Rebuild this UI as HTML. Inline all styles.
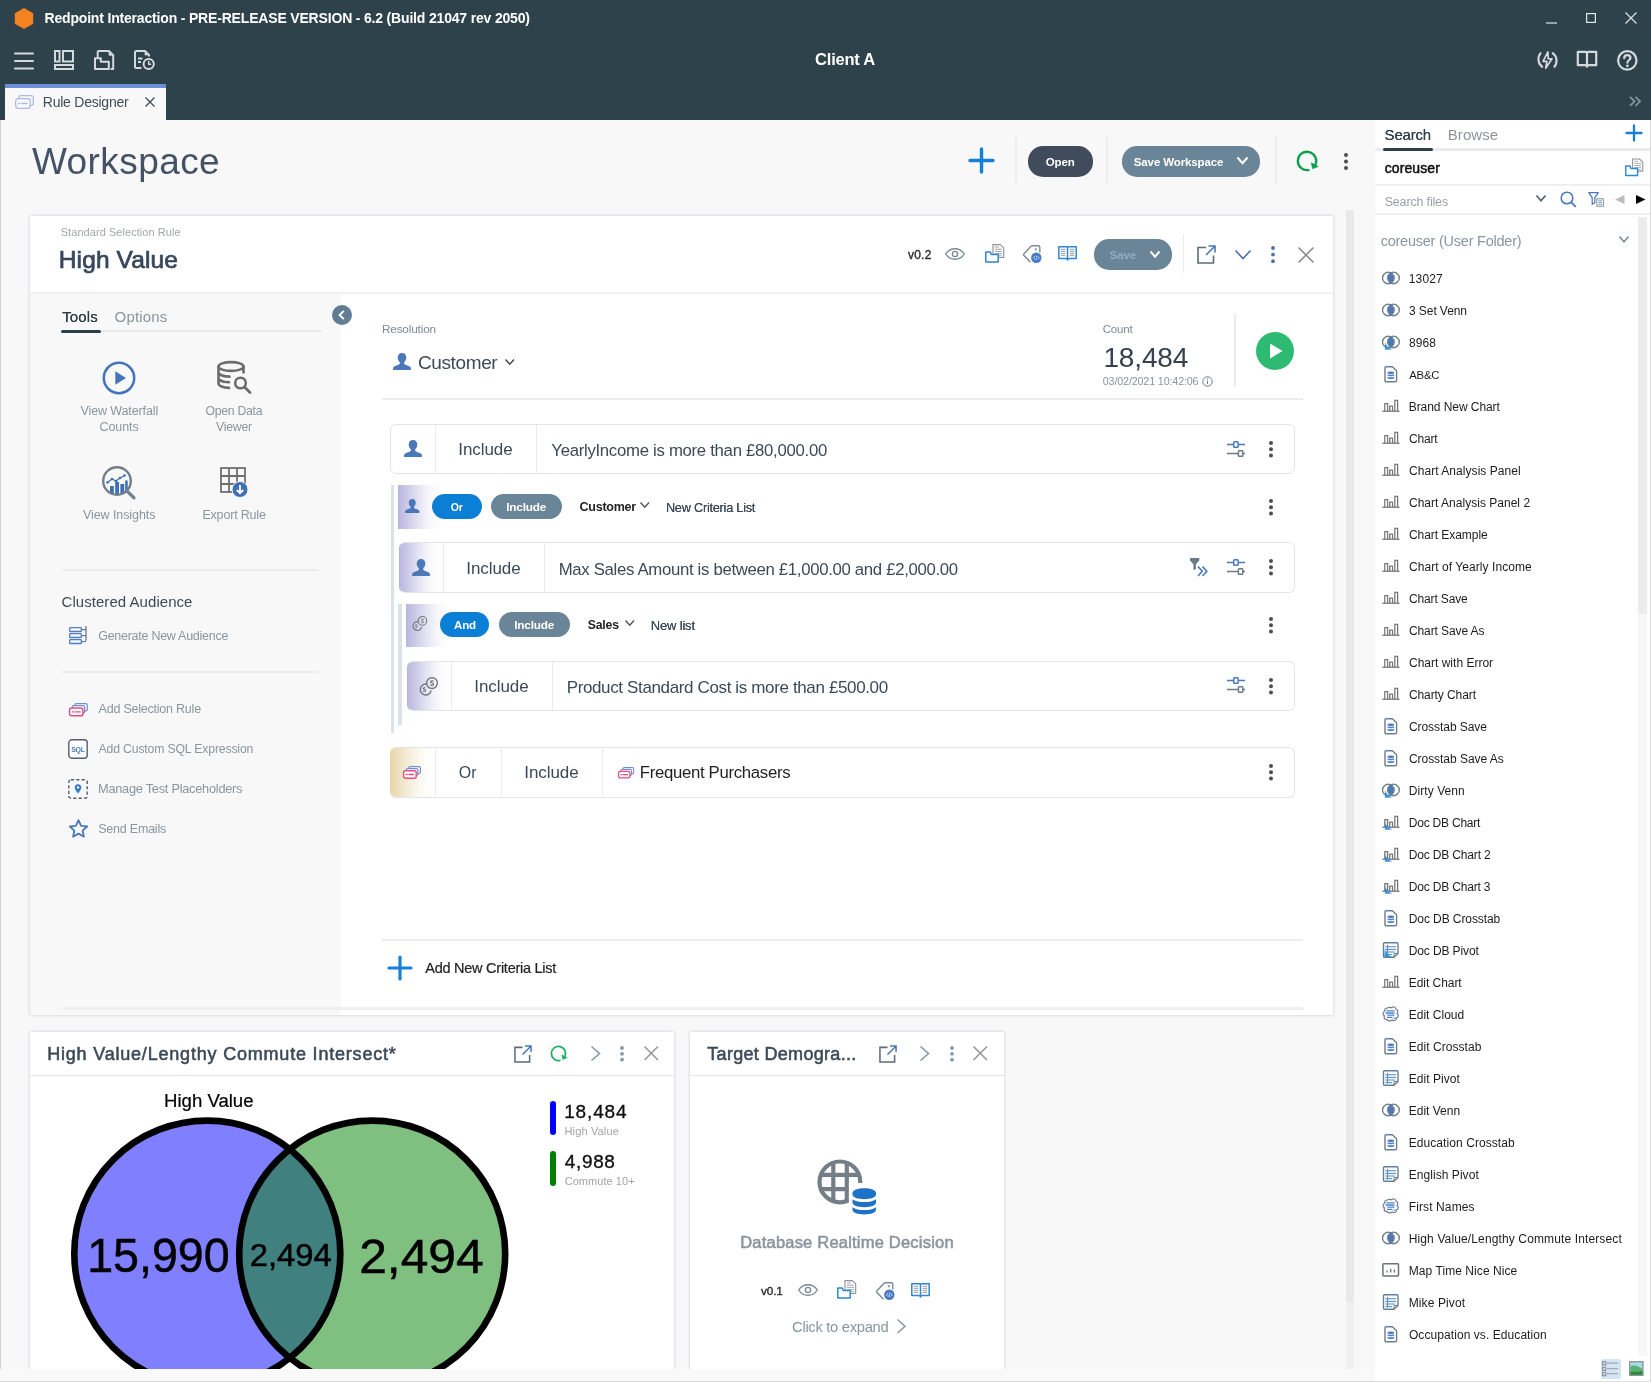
<!DOCTYPE html>
<html lang="en">
<head>
<meta charset="utf-8">
<title>Redpoint Interaction - Rule Designer</title>
<style>
*{box-sizing:border-box;margin:0;padding:0}
html,body{width:1651px;height:1382px;overflow:hidden;background:#f8f8f8}
body{filter:opacity(1);position:relative;font-family:"Liberation Sans",sans-serif;color:#3c4a57;font-size:13px;-webkit-font-smoothing:antialiased}
.abs{position:absolute}
.t,.inc,.crit,.lnk,.it{position:absolute;white-space:nowrap}
svg{position:absolute;overflow:visible}
#hdr{position:absolute;left:0;top:0;width:1651px;height:120px;background:#2e424b}
#tab{position:absolute;left:5px;top:84px;width:161px;height:36px;background:#f8f8f8;border-top:4px solid #6c8fd8}
.hd{font-weight:bold;color:#fff}
.card{position:absolute;background:#fff;box-shadow:0 0 3px rgba(60,70,110,.26)}
.pill{position:absolute;border-radius:15px;color:#fff;font-weight:bold;text-align:center;white-space:nowrap}
.vd{position:absolute;width:2px;background:#eeeeee}
.row{position:absolute;height:49px;border:1px solid #e3e5e7;border-radius:6px;background:#fff;overflow:hidden}
.row .dv{position:absolute;top:0;width:1px;height:49px;background:#e9ebec}
.row .grad{position:absolute;left:-1px;top:0;width:40px;height:49px}
.gp{background:linear-gradient(90deg,#b9b5de 0,#cfcce9 25%,#e6e5f3 50%,#f7f7fb 75%,#fff 100%)}
.row.hg{border-left-color:#b9b5de}
.row.ht{border-left-color:#e8d6a8}
.gt{background:linear-gradient(90deg,#e8d6a8 0,#efe3c4 25%,#f6efde 50%,#fcf9f2 75%,#fff 100%)}
.inc{position:absolute;font-size:17px;line-height:1;color:#3c4a57;white-space:nowrap}
.crit{position:absolute;font-size:17px;line-height:1;color:#3c4a57;white-space:nowrap}
.tool{position:absolute;font-size:13px;line-height:16px;color:#8a959e;text-align:center;width:120px}
.lnk{position:absolute;font-size:13px;line-height:1;color:#8a959e;white-space:nowrap}
.it{position:absolute;left:1409px;font-size:13px;line-height:1;color:#222;white-space:nowrap}
</style>
</head>
<body>
<div id="hdr"></div>
<svg style="left:14px;top:8px" width="20" height="21" viewBox="0 0 20 21" ><polygon points="10,0 19.2,5.2 19.2,15.8 10,21 0.8,15.8 0.8,5.2" fill="#f58220"/></svg>
<div class="t" style="left:44.48px;top:6.0px;font-size:14px;line-height:24px;color:#fff;font-weight:bold;letter-spacing:-0.177px;">Redpoint Interaction - PRE-RELEASE VERSION - 6.2 (Build 21047 rev 2050)</div>
<svg style="left:1546px;top:22px" width="11" height="2" viewBox="0 0 11 2" ><path d="M0 1H11" stroke="#dfe4e6" stroke-width="1.2"/></svg>
<svg style="left:1586px;top:13px" width="10" height="10" viewBox="0 0 10 10" ><rect x="0.6" y="0.6" width="8.8" height="8.8" fill="none" stroke="#dfe4e6" stroke-width="1.2"/></svg>
<svg style="left:1625px;top:12px" width="12" height="12" viewBox="0 0 12 12" ><path d="M0.5 0.5L11.5 11.5M11.5 0.5L0.5 11.5" stroke="#dfe4e6" stroke-width="1.2"/></svg>
<svg style="left:14px;top:51px" width="20" height="20" viewBox="0 0 20 20" ><g stroke="#d3d9dc" stroke-width="2" stroke-linecap="round"><path d="M1 2.5H19M1 10H19M1 17.5H19"/></g></svg>
<svg style="left:54px;top:50px" width="20" height="20" viewBox="0 0 20 20" ><g fill="none" stroke="#d3d9dc" stroke-width="2"><rect x="1" y="1" width="4.5" height="10.5"/><rect x="9" y="1" width="10" height="10.5"/><rect x="1" y="15" width="18" height="4"/></g></svg>
<svg style="left:94px;top:50px" width="20" height="20" viewBox="0 0 20 20" ><g fill="none" stroke="#d3d9dc" stroke-width="2" stroke-linejoin="round"><path d="M3.7 7.500V2A1 1 0 0 1 4.700 1H15L19.200 5.200V19H16.500"/><path d="M15 1V5.200H19.200Z" fill="#d3d9dc" stroke-width="0.8"/><path d="M1 8.300H6.800V11.800H14.800V19H1Z"/></g></svg>
<svg style="left:134px;top:50px" width="20" height="20" viewBox="0 0 20 20" ><g fill="none" stroke="#d3d9dc" stroke-width="2" stroke-linejoin="round"><path d="M7.500 18H2.500A1.500 1.500 0 0 1 1 16.500V2.500A1.500 1.500 0 0 1 2.500 1H11L15 5V6.500"/><path d="M11 1V5H15Z" fill="#d3d9dc" stroke-width="0.8"/><path d="M4 8.500H8.500M4 12H7" /><circle cx="14.700" cy="14" r="5.100"/><path d="M14.700 11V14.300H17.200" stroke-width="1.500"/></g></svg>
<div class="t" style="left:815.12px;top:47.0px;font-size:16.5px;line-height:24px;color:#fff;font-weight:bold;letter-spacing:-0.241px;">Client A</div>
<svg style="left:1537px;top:49.5px" width="21" height="20" viewBox="0 0 21 20" ><g fill="none" stroke="#d3d9dc" stroke-width="2.100" stroke-linecap="round" stroke-linejoin="round"><path d="M3.600 3.200A9.600 9.600 0 0 0 5.200 16.900"/><path d="M17.400 16.800A9.600 9.600 0 0 0 15.800 3.100"/><path d="M10.900 1.800L6 11.300H9.900L8.700 18.200L15 8.800H11.200Z" stroke-width="1.700"/></g></svg>
<svg style="left:1576px;top:50px" width="22" height="18" viewBox="0 0 22 18" ><g fill="none" stroke="#d3d9dc" stroke-width="2.200" stroke-linejoin="round"><path d="M1.800 1.800H9.400C10.400 1.800 11 2.300 11 3.200C11 2.300 11.600 1.800 12.600 1.800H20.200V15.200H12.800C11.800 15.200 11.300 15.700 11 16.600C10.700 15.700 10.200 15.200 9.200 15.200H1.800Z"/><path d="M11 3.200V16"/></g></svg>
<svg style="left:1617px;top:49.5px" width="21" height="21" viewBox="0 0 21 21" ><g fill="none" stroke="#d3d9dc" stroke-width="2.200"><circle cx="10.300" cy="10.400" r="9.200"/><path d="M7.200 8.200C7.200 6.200 8.600 5.200 10.300 5.200C12.100 5.200 13.500 6.300 13.500 7.900C13.500 9.900 10.400 10.200 10.400 12.700" stroke-linecap="round"/></g><circle cx="10.400" cy="15.800" r="1.400" fill="#d3d9dc"/></svg>
<svg style="left:1628.7px;top:95.5px" width="12" height="11" viewBox="0 0 12 11" ><path d="M1 0.800L5.500 5.300 1 9.800M6.500 0.800L11 5.300 6.500 9.800" fill="none" stroke="#8496a0" stroke-width="1.800"/></svg>
<div id="tab"></div>
<svg style="left:15px;top:95px" width="19" height="14" viewBox="0 0 19 14" ><g fill="none" stroke="#a9bbe8" stroke-width="1.3"><rect x="0.7" y="3.700" width="14.5" height="9.6" rx="2.5"/><path d="M3.8 3.700V2.800A2.100 2.100 0 0 1 5.900 0.700H16.200A2.100 2.100 0 0 1 18.300 2.800V8.200A2.100 2.100 0 0 1 16.200 10.300H15.200"/><path d="M3.600 8.500H5M7 8.500H12" stroke-linecap="round"/></g></svg>
<div class="t" style="left:42.83px;top:90.0px;font-size:14px;line-height:24px;color:#3f4d59;letter-spacing:-0.24px;">Rule Designer</div>
<svg style="left:145px;top:97px" width="10" height="10" viewBox="0 0 10 10" ><path d="M0.500 0.500L9.500 9.500M9.500 0.500L0.500 9.500" stroke="#3f4d59" stroke-width="1.3"/></svg>
<div class="abs" style="left:0;top:120px;width:1px;height:1262px;background:#cfcfcf"></div>
<div class="t" style="left:31.93px;top:149.5px;font-size:37px;line-height:24px;color:#435264;letter-spacing:0.422px;">Workspace</div>
<svg style="left:969px;top:148px" width="25" height="25" viewBox="0 0 25 25" ><path d="M12.500 1V24M1 12.500H24" stroke="#1680d8" stroke-width="3.400" stroke-linecap="round"/></svg>
<div class="vd" style="left:1015px;top:137px;height:46px"></div>
<div class="pill" style="left:1028px;top:146px;width:65px;height:30.500px;background:#404b5c"></div>
<div class="t" style="left:1045.74px;top:150.0px;font-size:11.5px;line-height:24px;color:#fff;font-weight:bold;letter-spacing:-0.083px;">Open</div>
<div class="vd" style="left:1106px;top:137px;height:46px"></div>
<div class="pill" style="left:1122px;top:146px;width:138px;height:30.500px;background:#6a8598"></div>
<div class="t" style="left:1133.81px;top:150.0px;font-size:11.5px;line-height:24px;color:#fff;font-weight:bold;letter-spacing:-0.12px;">Save Workspace</div>
<svg style="left:1237px;top:157px" width="11" height="7" viewBox="0 0 11 7" ><path d="M0.500 0.500L5.5 6.2L10.5 0.500" fill="none" stroke="#fff" stroke-width="2"/></svg>
<div class="vd" style="left:1275px;top:137px;height:46px"></div>
<svg style="left:1296px;top:150px" width="22" height="22" viewBox="0 0 22 22" ><path d="M12.600 20.060A9.200 9.200 0 1 1 19.340 14.890" fill="none" stroke="#0aa04c" stroke-width="2.300" stroke-linecap="round"/><path d="M15.200 12.700L22.200 16.500 16.600 18.800Z" fill="#0aa04c" stroke="#0aa04c" stroke-width="0.600" stroke-linejoin="round"/></svg>
<svg style="left:1343.6px;top:152.6px" width="4" height="18" viewBox="0 0 4 18" ><g fill="#4d4d4d"><circle cx="2" cy="2" r="2"/><circle cx="2" cy="8.5" r="2"/><circle cx="2" cy="15.0" r="2"/></g></svg>
<div class="abs" style="left:1346px;top:210px;width:8px;height:1160px;background:#f0f0f0"></div>
<div class="abs" style="left:1346px;top:210px;width:8px;height:1092px;background:#e9e9e9"></div>
<div class="card" style="left:30px;top:216px;width:1303px;height:799px"></div>
<div class="abs" style="left:30px;top:292px;width:1303px;height:2px;background:#f1f1f1"></div>
<div class="abs" style="left:30px;top:294px;width:311px;height:721px;background:#f8f8f8"></div>
<div class="t" style="left:60.7px;top:220.0px;font-size:11px;line-height:24px;color:#a2a6aa;letter-spacing:0.06px;">Standard Selection Rule</div>
<div class="t" style="left:58.8px;top:247.5px;font-size:24.5px;line-height:24px;color:#37465a;letter-spacing:0.111px;-webkit-text-stroke:0.7px currentColor;">High Value</div>
<div class="t" style="left:908.0px;top:243.0px;font-size:12px;line-height:24px;color:#2b2b2b;letter-spacing:0.225px;-webkit-text-stroke:0.35px currentColor;">v0.2</div>
<svg style="left:945px;top:248px" width="20" height="12" viewBox="0 0 20 12" ><g fill="none" stroke="#7b8a93" stroke-width="1.4"><path d="M0.700 6C3 2.300 6.300 0.700 10 0.700C13.700 0.700 17 2.300 19.300 6C17 9.700 13.700 11.300 10 11.300C6.300 11.300 3 9.700 0.700 6Z"/><circle cx="10" cy="6" r="2.600"/></g></svg>
<svg style="left:984.5px;top:244.3px" width="20" height="19" viewBox="0 0 20 19" ><g fill="#fff" stroke="#8b8f94" stroke-width="1.1" stroke-linejoin="round"><path d="M8 13.500V0.600H15.300L18.700 3.800V13.500Z"/></g><g stroke="#9a9ea3" stroke-width="0.9"><path d="M9.800 3H14M9.800 5.200H17M9.800 7.400H17M9.800 9.600H17M13.500 11.800H17"/></g><path d="M0.800 18V8H5.300L6.300 10.600H13.200V18Z" fill="#fff" stroke="#2f86d6" stroke-width="1.5" stroke-linejoin="round"/></svg>
<svg style="left:1022.5px;top:245.2px" width="19" height="18" viewBox="0 0 19 18" ><g fill="none" stroke="#7b8a93" stroke-width="1.4" stroke-linejoin="round" stroke-linecap="round"><path d="M7 16.800L1 10.600C0.500 10 0.500 9.300 1 8.800L8 1.300C8.400 0.900 8.900 0.700 9.400 0.700H15.300C16.200 0.700 16.800 1.300 16.800 2.200V7"/></g><circle cx="12.800" cy="4.300" r="1.100" fill="#7b8a93"/><circle cx="13.300" cy="12.800" r="5.200" fill="#4a78c4"/><path d="M12 11L10.300 12.800 12 14.600M14.600 11L16.300 12.800 14.600 14.600M13.800 10.600L12.800 15" fill="none" stroke="#cfe0f7" stroke-width="0.8"/></svg>
<svg style="left:1058px;top:246.3px" width="19" height="15" viewBox="0 0 19 15" ><g fill="#fff" stroke="#2f86d6" stroke-width="1.5" stroke-linejoin="round"><path d="M0.800 0.800H8.300C9 0.800 9.500 1.200 9.500 1.800C9.500 1.200 10 0.800 10.700 0.800H18.200V12.600H11C10.200 12.600 9.800 13 9.500 13.900C9.200 13 8.800 12.600 8 12.600H0.800Z"/><path d="M9.500 1.800V13.500"/></g><g stroke="#8b8f94" stroke-width="0.9"><path d="M2.800 3.300H7.300M2.800 5.300H7.300M2.800 7.300H7.300M2.800 9.300H7.300M11.700 3.300H16.200M11.700 5.300H16.200M11.700 7.300H16.200M11.700 9.300H16.200"/></g></svg>
<div class="pill" style="left:1094px;top:239px;width:78px;height:30.500px;background:#6a8598"></div>
<div class="t" style="left:1109.81px;top:243.0px;font-size:11.5px;line-height:24px;color:#93abbd;font-weight:bold;letter-spacing:-0.129px;">Save</div>
<svg style="left:1150px;top:251px" width="10" height="6" viewBox="0 0 10 6" ><path d="M0.500 0.500L5.0 5.7L9.5 0.500" fill="none" stroke="#fff" stroke-width="2"/></svg>
<div class="abs" style="left:1183px;top:234px;width:1px;height:39px;background:#ececec"></div>
<svg style="left:1197px;top:244.5px" width="19" height="19" viewBox="0 0 19 19" ><path d="M9 2.500H1V18H16.500V10.500" fill="none" stroke="#5f6b75" stroke-width="1.600"/><path d="M9 10L17.500 1.500M11.500 1H18V7.500" fill="none" stroke="#4a78b8" stroke-width="1.600"/></svg>
<svg style="left:1235px;top:250px" width="16" height="9" viewBox="0 0 16 9" ><path d="M0.500 0.500L8.0 8.5L15.5 0.500" fill="none" stroke="#4a6fa8" stroke-width="1.6"/></svg>
<svg style="left:1271px;top:246px" width="4" height="18" viewBox="0 0 4 18" ><g fill="#4a6fa8"><circle cx="2" cy="2" r="1.9"/><circle cx="2" cy="8.6" r="1.9"/><circle cx="2" cy="15.2" r="1.9"/></g></svg>
<svg style="left:1297.5px;top:246.5px" width="16" height="16" viewBox="0 0 16 16" ><path d="M0.500 0.500L15.5 15.5M15.5 0.500L0.500 15.5" stroke="#8a8a8a" stroke-width="1.6" fill="none"/></svg>
<div class="t" style="left:62.31px;top:304.5px;font-size:15px;line-height:24px;color:#2e3f4c;letter-spacing:0.078px;text-shadow:0 0 0.4px #2e3f4c;">Tools</div>
<div class="t" style="left:114.59px;top:304.5px;font-size:15px;line-height:24px;color:#8a959e;letter-spacing:0.167px;">Options</div>
<div class="abs" style="left:62px;top:330px;width:260px;height:2px;background:#ebebeb"></div>
<div class="abs" style="left:60.5px;top:330px;width:40px;height:3px;border-radius:2px;background:#2e3f4c"></div>
<svg style="left:332px;top:305px" width="20" height="20" viewBox="0 0 20 20" ><circle cx="10" cy="10" r="10" fill="#607d94"/><path d="M11.800 5.800L7.600 10 11.800 14.200" fill="none" stroke="#fff" stroke-width="1.900"/></svg>
<svg style="left:102px;top:361px" width="34" height="34" viewBox="0 0 34 34" ><circle cx="17" cy="17" r="15.200" fill="none" stroke="#4474ba" stroke-width="2.500"/><path d="M13.300 10.200V23.800L24 17Z" fill="#4474ba"/></svg>
<div class="t" style="left:80.5px;top:399.0px;font-size:12.5px;line-height:24px;color:#8a959e;letter-spacing:-0.111px;">View Waterfall</div>
<div class="t" style="left:99.62px;top:415.0px;font-size:12.5px;line-height:24px;color:#8a959e;letter-spacing:-0.113px;">Counts</div>
<svg style="left:217px;top:361px" width="36" height="34" viewBox="0 0 36 34" ><g fill="none" stroke="#6c6c6c" stroke-width="2.600" stroke-linecap="round"><ellipse cx="14" cy="5.500" rx="12.500" ry="4.400"/><path d="M1.500 5.500V22.500C1.500 24.800 6 26.700 12 26.900M1.500 11.200C1.500 13.500 6 15.300 12.500 15.600M1.500 16.900C1.500 19.200 6 21 12 21.300M26.500 5.500V11.500"/><circle cx="23.500" cy="22" r="5.300"/><path d="M27.500 26L33 31.500" stroke-width="2.800"/></g></svg>
<div class="t" style="left:205.41px;top:399.0px;font-size:12.25px;line-height:24px;color:#8a959e;letter-spacing:-0.273px;">Open Data</div>
<div class="t" style="left:216.0px;top:415.0px;font-size:12.25px;line-height:24px;color:#8a959e;letter-spacing:-0.212px;">Viewer</div>
<svg style="left:101px;top:465px" width="36" height="36" viewBox="0 0 36 36" ><g fill="#3f6fb5"><rect x="9" y="21" width="3.800" height="8"/><rect x="14.200" y="17" width="3.800" height="12.500"/><rect x="19.400" y="19" width="3.800" height="10"/><rect x="24.200" y="15.500" width="2.500" height="11"/></g><path d="M6.500 17.500L11 14L15 16L19 13L23.500 10.500" fill="none" stroke="#3f6fb5" stroke-width="1.300"/><g fill="#3f6fb5"><circle cx="6.500" cy="17.500" r="1.300"/><circle cx="11" cy="14" r="1.300"/><circle cx="15" cy="16" r="1.300"/><circle cx="19" cy="13" r="1.300"/><circle cx="23.500" cy="10.500" r="1.300"/></g><circle cx="16" cy="16" r="13.800" fill="none" stroke="#707e89" stroke-width="2.400"/><path d="M26 26L33 32.800" stroke="#707e89" stroke-width="3.200" stroke-linecap="round"/></svg>
<div class="t" style="left:83.0px;top:503.0px;font-size:12.5px;line-height:24px;color:#8a959e;letter-spacing:-0.083px;">View Insights</div>
<svg style="left:220px;top:467px" width="30" height="32" viewBox="0 0 30 32" ><g fill="none" stroke="#6f6f6f" stroke-width="1.800"><rect x="1" y="1" width="24" height="24"/><path d="M9 1V25M17 1V25M1 9H25M1 17H25"/></g><circle cx="20" cy="22.500" r="8" fill="#3f6fb5" stroke="#f8f8f8" stroke-width="1"/><path d="M20 18V26M16.800 23L20 26.300 23.200 23" fill="none" stroke="#fff" stroke-width="1.800"/></svg>
<div class="t" style="left:202.4px;top:503.0px;font-size:12.5px;line-height:24px;color:#8a959e;letter-spacing:-0.181px;">Export Rule</div>
<div class="abs" style="left:62px;top:569px;width:256px;height:2px;background:#ececec"></div>
<div class="t" style="left:61.55px;top:589.5px;font-size:15px;line-height:24px;color:#3c4a57;letter-spacing:0.048px;">Clustered Audience</div>
<svg style="left:69px;top:626px" width="20" height="19" viewBox="0 0 20 19" ><g fill="none" stroke="#4f7fc6" stroke-width="1.300"><rect x="0.700" y="1.700" width="11.600" height="3.800" rx="0.600"/><rect x="0.700" y="7.700" width="11.600" height="3.800" rx="0.600"/><rect x="0.700" y="13.700" width="11.600" height="3.800" rx="0.600"/><path d="M12.300 3.600H17M12.300 9.600H17M12.300 15.600H15.500A1.500 1.500 0 0 0 17 14.100V0" stroke="#6c7a86"/></g></svg>
<div class="lnk" style="left:98.22px;top:624.0px;font-size:12.5px;line-height:24px;color:#8a959e;letter-spacing:-0.269px;">Generate New Audience</div>
<div class="abs" style="left:62px;top:671px;width:256px;height:2px;background:#ececec"></div>
<svg style="left:68.8px;top:703px" width="20" height="14" viewBox="0 0 20 14" ><g transform="scale(1.05)" fill="#fff" stroke-width="1.200" stroke-linejoin="round"><rect x="5.600" y="0.600" width="11.800" height="7" rx="1.500" stroke="#6f8fcf"/><rect x="3.100" y="2.600" width="11.800" height="7" rx="1.500" stroke="#6f8fcf"/><rect x="0.600" y="4.800" width="12.600" height="7.400" rx="1.800" stroke="#ea4c7d" stroke-width="1.400"/><path d="M3.200 8.500H4.200M6 8.500H10.600" stroke="#ea4c7d" stroke-width="1.300" stroke-linecap="round"/></g></svg>
<div class="lnk" style="left:98.6px;top:697.0px;font-size:12.5px;line-height:24px;color:#8a959e;letter-spacing:-0.224px;">Add Selection Rule</div>
<svg style="left:67.5px;top:739px" width="21" height="20" viewBox="0 0 21 20" ><rect x="0.800" y="0.800" width="18.400" height="18.400" rx="3" fill="#fff" stroke="#555f69" stroke-width="1.400"/><text x="10" y="12.800" font-family="Liberation Sans, sans-serif" font-size="7" font-weight="bold" fill="#4a78b8" text-anchor="middle" letter-spacing="-0.3">SQL</text></svg>
<div class="lnk" style="left:98.6px;top:737.0px;font-size:12.25px;line-height:24px;color:#8a959e;letter-spacing:-0.172px;">Add Custom SQL Expression</div>
<svg style="left:67.5px;top:779px" width="21" height="20" viewBox="0 0 21 20" ><rect x="0.800" y="0.800" width="18.400" height="18.400" rx="2" fill="none" stroke="#555f69" stroke-width="1.400" stroke-dasharray="3.200 2.200"/><path d="M10 5.200C8 5.200 6.700 6.600 6.700 8.400C6.700 10.500 10 14.400 10 14.400C10 14.400 13.300 10.500 13.300 8.400C13.300 6.600 12 5.200 10 5.200Z" fill="#2f78c8"/><circle cx="10" cy="8.400" r="1.200" fill="#fff"/></svg>
<div class="lnk" style="left:98.0px;top:776.5px;font-size:12.75px;line-height:24px;color:#8a959e;letter-spacing:-0.242px;">Manage Test Placeholders</div>
<svg style="left:68.5px;top:819px" width="20" height="19" viewBox="0 0 20 19" ><path d="M9.500 1.200L12.100 6.800L18.200 7.500L13.600 11.600L14.900 17.700L9.500 14.600L4.100 17.700L5.400 11.600L0.800 7.500L6.900 6.800Z" fill="none" stroke="#4a78b8" stroke-width="1.800" stroke-linejoin="round"/></svg>
<div class="lnk" style="left:98.26px;top:817.0px;font-size:12.5px;line-height:24px;color:#8a959e;letter-spacing:-0.219px;">Send Emails</div>
<div class="t" style="left:381.94px;top:316.5px;font-size:11.75px;line-height:24px;color:#7b8a93;letter-spacing:-0.153px;">Resolution</div>
<svg style="left:393.4px;top:353.3px" width="18" height="17" viewBox="0 0 18 17" ><path d="M9 0C11.600 0 13.300 2 13.300 4.600C13.300 6.600 12.400 8.300 11.200 9.200V10.300C11.200 11 11.700 11.400 12.500 11.700L15.800 12.900C17.200 13.400 18 14.400 18 15.800V16.200C18 16.700 17.700 17 17.200 17H0.800C0.300 17 0 16.700 0 16.200V15.800C0 14.400 0.800 13.400 2.200 12.900L5.500 11.700C6.300 11.400 6.800 11 6.800 10.300V9.200C5.600 8.300 4.700 6.600 4.700 4.600C4.700 2 6.400 0 9 0Z" fill="#4a78b8"/></svg>
<div class="t" style="left:417.94px;top:350.5px;font-size:19.0px;line-height:24px;color:#3c4a57;letter-spacing:-0.375px;">Customer</div>
<svg style="left:505px;top:358.5px" width="10" height="6" viewBox="0 0 10 6" ><path d="M0.500 0.500L4.75 5.2L9.0 0.500" fill="none" stroke="#3c4a57" stroke-width="1.5"/></svg>
<div class="t" style="left:1102.66px;top:317.0px;font-size:11.5px;line-height:24px;color:#7b8a93;letter-spacing:-0.141px;">Count</div>
<div class="t" style="left:1103.42px;top:345.5px;font-size:28px;line-height:24px;color:#37424e;letter-spacing:-0.15px;">18,484</div>
<div class="t" style="left:1102.78px;top:369.0px;font-size:10.75px;line-height:24px;color:#8a959e;letter-spacing:-0.156px;">03/02/2021 10:42:06</div>
<svg style="left:1202px;top:376px" width="11" height="11" viewBox="0 0 11 11" ><circle cx="5.500" cy="5.500" r="4.700" fill="none" stroke="#6b7780" stroke-width="1"/><path d="M5.500 4.800V8" stroke="#6b7780" stroke-width="1.100"/><circle cx="5.500" cy="3.200" r="0.700" fill="#6b7780"/></svg>
<div class="abs" style="left:1234px;top:314px;width:1.500px;height:72px;background:#ebebeb"></div>
<svg style="left:1255.5px;top:331.5px" width="38" height="38" viewBox="0 0 38 38" ><circle cx="19" cy="19" r="19" fill="#2dbb73"/><path d="M14 11.500V26.500L26.500 19Z" fill="#fff"/></svg>
<div class="abs" style="left:382px;top:397.500px;width:921px;height:2px;background:#eeeeee"></div>
<div class="row" style="left:390px;top:424px;width:905px;height:50px"><div class="dv" style="left:44px;height:50px"></div><div class="dv" style="left:145px;height:50px"></div></div>
<svg style="left:403.7px;top:440.3px" width="18" height="17" viewBox="0 0 18 17" ><path d="M9 0C11.600 0 13.300 2 13.300 4.600C13.300 6.600 12.400 8.300 11.200 9.200V10.300C11.200 11 11.700 11.400 12.500 11.700L15.800 12.900C17.200 13.400 18 14.400 18 15.800V16.200C18 16.700 17.700 17 17.200 17H0.800C0.300 17 0 16.700 0 16.200V15.800C0 14.400 0.800 13.400 2.200 12.900L5.500 11.700C6.300 11.400 6.800 11 6.800 10.300V9.200C5.600 8.300 4.700 6.600 4.700 4.600C4.700 2 6.400 0 9 0Z" fill="#4a78b8"/></svg>
<div class="inc" style="left:458.36px;top:437.5px;font-size:17px;line-height:24px;color:#3c4a57;letter-spacing:-0.094px;">Include</div>
<div class="crit" style="left:551.31px;top:438.5px;font-size:16.75px;line-height:24px;color:#3c4a57;letter-spacing:-0.293px;">YearlyIncome is more than £80,000.00</div>
<svg style="left:1227px;top:440.6px" width="19" height="17" viewBox="0 0 19 17" ><path d="M0 3.500H6.500M11.500 3.500H18" stroke="#4a78b8" stroke-width="1.400"/><rect x="6.700" y="0.700" width="4.400" height="5.600" rx="0.800" fill="none" stroke="#4a78b8" stroke-width="1.500"/><path d="M0 12.500H11.200M16 12.500H18" stroke="#6c7a86" stroke-width="1.400"/><rect x="11.400" y="9.700" width="4.400" height="5.600" rx="0.800" fill="none" stroke="#6c7a86" stroke-width="1.500"/></svg><svg style="left:1268.8px;top:440.70000000000005px" width="4" height="18" viewBox="0 0 4 18" ><g fill="#4d4d4d"><circle cx="2" cy="2" r="2"/><circle cx="2" cy="8.2" r="2"/><circle cx="2" cy="14.4" r="2"/></g></svg>
<div class="abs" style="left:390.500px;top:484.500px;width:3.500px;height:248px;background:#dbe3ea"></div>
<div class="abs gp" style="left:398px;top:484.500px;width:42px;height:44px"></div>
<svg style="left:404.9px;top:498.8px" width="14.5" height="14" viewBox="0 0 18 17" preserveAspectRatio="none"><path d="M9 0C11.600 0 13.300 2 13.300 4.600C13.300 6.600 12.400 8.300 11.200 9.200V10.300C11.200 11 11.700 11.400 12.500 11.700L15.800 12.900C17.200 13.400 18 14.400 18 15.800V16.200C18 16.700 17.700 17 17.200 17H0.800C0.300 17 0 16.700 0 16.200V15.800C0 14.400 0.800 13.400 2.200 12.900L5.500 11.700C6.300 11.400 6.800 11 6.800 10.300V9.200C5.600 8.300 4.700 6.600 4.700 4.600C4.700 2 6.400 0 9 0Z" fill="#4a78b8"/></svg>
<div class="pill" style="left:432px;top:494px;width:49.500px;height:24.500px;background:#0a7fd5"></div>
<div class="t" style="left:450.82px;top:495.0px;font-size:10.5px;line-height:24px;color:#fff;font-weight:bold;letter-spacing:-0.25px;">Or</div>
<div class="pill" style="left:491px;top:494px;width:70.500px;height:24.500px;background:#6a8598"></div>
<div class="t" style="left:506.25px;top:494.5px;font-size:11.75px;line-height:24px;color:#fff;font-weight:bold;letter-spacing:-0.177px;">Include</div>
<div class="t" style="left:579.62px;top:495.0px;font-size:12.5px;line-height:24px;color:#222;letter-spacing:-0.268px;font-weight:bold;">Customer</div>
<svg style="left:640px;top:502px" width="10" height="6" viewBox="0 0 10 6" ><path d="M0.500 0.500L4.75 5.2L9.0 0.500" fill="none" stroke="#555" stroke-width="1.4"/></svg>
<div class="t" style="left:665.9px;top:495.5px;font-size:12.75px;line-height:24px;color:#3c4a57;letter-spacing:-0.25px;text-shadow:0 0 0.3px #3c4a57;">New Criteria List</div>
<svg style="left:1268.8px;top:498.5px" width="4" height="18" viewBox="0 0 4 18" ><g fill="#4d4d4d"><circle cx="2" cy="2" r="2"/><circle cx="2" cy="8.2" r="2"/><circle cx="2" cy="14.4" r="2"/></g></svg>
<div class="row hg" style="left:398.5px;top:542px;width:896.5px;height:51px"><div class="grad gp" style="height:51px"></div><div class="dv" style="left:43.5px;height:51px"></div><div class="dv" style="left:144.5px;height:51px"></div></div>
<svg style="left:411.7px;top:558.8px" width="18" height="17" viewBox="0 0 18 17" ><path d="M9 0C11.600 0 13.300 2 13.300 4.600C13.300 6.600 12.400 8.300 11.200 9.200V10.300C11.200 11 11.700 11.400 12.500 11.700L15.800 12.900C17.200 13.400 18 14.400 18 15.800V16.200C18 16.700 17.700 17 17.200 17H0.800C0.300 17 0 16.700 0 16.200V15.800C0 14.400 0.800 13.400 2.200 12.900L5.500 11.700C6.300 11.400 6.800 11 6.800 10.300V9.200C5.600 8.300 4.700 6.600 4.700 4.600C4.700 2 6.400 0 9 0Z" fill="#4a78b8"/></svg>
<div class="inc" style="left:466.36px;top:556.5px;font-size:17px;line-height:24px;color:#3c4a57;letter-spacing:-0.094px;">Include</div>
<div class="crit" style="left:558.71px;top:557.5px;font-size:16.75px;line-height:24px;color:#3c4a57;letter-spacing:-0.318px;">Max Sales Amount is between £1,000.00 and £2,000.00</div>
<svg style="left:1189.7px;top:558.1px" width="19" height="19" viewBox="0 0 19 19" ><path d="M0 0.600C0 0.200 0.200 0 0.600 0H8.700C9.100 0 9.300 0.200 9.300 0.600V2.500L5.900 6.300V11.200L3.400 12V6.300L0 2.500Z" fill="#6c7a86"/><path d="M8 8.600L12.300 13.300 8 18M12.500 8.600L16.800 13.300 12.500 18" fill="none" stroke="#4a78b8" stroke-width="1.600"/></svg><svg style="left:1227px;top:559.0px" width="19" height="17" viewBox="0 0 19 17" ><path d="M0 3.500H6.500M11.500 3.500H18" stroke="#4a78b8" stroke-width="1.400"/><rect x="6.700" y="0.700" width="4.400" height="5.600" rx="0.800" fill="none" stroke="#4a78b8" stroke-width="1.500"/><path d="M0 12.500H11.200M16 12.500H18" stroke="#6c7a86" stroke-width="1.400"/><rect x="11.400" y="9.700" width="4.400" height="5.600" rx="0.800" fill="none" stroke="#6c7a86" stroke-width="1.500"/></svg><svg style="left:1268.8px;top:559.1px" width="4" height="18" viewBox="0 0 4 18" ><g fill="#4d4d4d"><circle cx="2" cy="2" r="2"/><circle cx="2" cy="8.2" r="2"/><circle cx="2" cy="14.4" r="2"/></g></svg>
<div class="abs" style="left:398.300px;top:603.500px;width:3.500px;height:121.500px;background:#dbe3ea"></div>
<div class="abs gp" style="left:406px;top:603.500px;width:42px;height:43.500px"></div>
<svg style="left:411.5px;top:616px" width="17" height="15" viewBox="0 0 17 15" ><g transform="scale(0.92)" fill="none" stroke="#767676" stroke-width="1.200"><circle cx="11.300" cy="5.300" r="4.700"/><path d="M7 6.200A4.800 4.800 0 1 0 10.600 11.800"/><path d="M12.800 3.800C12 3 10 3.200 10.100 4.400C10.200 5.600 12.700 5 12.700 6.300C12.700 7.500 10.600 7.600 9.800 6.700" stroke-width="1"/><path d="M5.600 9.700C5 9.100 3.700 9.400 3.800 10.200C3.900 11 5.700 10.700 5.700 11.700C5.700 12.500 4.200 12.600 3.600 12" stroke-width="1"/></g></svg>
<div class="pill" style="left:439.800px;top:612.300px;width:49.700px;height:24.500px;background:#0a7fd5"></div>
<div class="t" style="left:454.05px;top:613.0px;font-size:11.5px;line-height:24px;color:#fff;font-weight:bold;letter-spacing:-0.188px;">And</div>
<div class="pill" style="left:499px;top:612.300px;width:70.500px;height:24.500px;background:#6a8598"></div>
<div class="t" style="left:514.25px;top:612.5px;font-size:11.75px;line-height:24px;color:#fff;font-weight:bold;letter-spacing:-0.177px;">Include</div>
<div class="t" style="left:587.7px;top:613.0px;font-size:12.25px;line-height:24px;color:#222;letter-spacing:-0.172px;font-weight:bold;">Sales</div>
<svg style="left:625px;top:620px" width="10" height="6" viewBox="0 0 10 6" ><path d="M0.500 0.500L4.75 5.2L9.0 0.500" fill="none" stroke="#555" stroke-width="1.4"/></svg>
<div class="t" style="left:650.86px;top:613.5px;font-size:13px;line-height:24px;color:#3c4a57;letter-spacing:-0.196px;text-shadow:0 0 0.3px #3c4a57;">New list</div>
<svg style="left:1268.8px;top:617px" width="4" height="18" viewBox="0 0 4 18" ><g fill="#4d4d4d"><circle cx="2" cy="2" r="2"/><circle cx="2" cy="8.2" r="2"/><circle cx="2" cy="14.4" r="2"/></g></svg>
<div class="row hg" style="left:406.5px;top:661px;width:888.5px;height:50px"><div class="grad gp" style="height:50px"></div><div class="dv" style="left:43.5px;height:50px"></div><div class="dv" style="left:144.5px;height:50px"></div></div>
<svg style="left:418.5px;top:676.5px" width="20" height="18" viewBox="0 0 20 18" ><g transform="scale(1.15)" fill="none" stroke="#767676" stroke-width="1.200"><circle cx="11.300" cy="5.300" r="4.700"/><path d="M7 6.200A4.800 4.800 0 1 0 10.600 11.800"/><path d="M12.800 3.800C12 3 10 3.200 10.100 4.400C10.200 5.600 12.700 5 12.700 6.300C12.700 7.500 10.600 7.600 9.800 6.700" stroke-width="1"/><path d="M5.600 9.700C5 9.100 3.700 9.400 3.800 10.200C3.900 11 5.700 10.700 5.700 11.700C5.700 12.500 4.200 12.600 3.600 12" stroke-width="1"/></g></svg>
<div class="inc" style="left:474.36px;top:674.5px;font-size:17px;line-height:24px;color:#3c4a57;letter-spacing:-0.094px;">Include</div>
<div class="crit" style="left:566.67px;top:675.5px;font-size:17px;line-height:24px;color:#3c4a57;letter-spacing:-0.364px;">Product Standard Cost is more than £500.00</div>
<svg style="left:1227px;top:677.4px" width="19" height="17" viewBox="0 0 19 17" ><path d="M0 3.500H6.500M11.500 3.500H18" stroke="#4a78b8" stroke-width="1.400"/><rect x="6.700" y="0.700" width="4.400" height="5.600" rx="0.800" fill="none" stroke="#4a78b8" stroke-width="1.500"/><path d="M0 12.500H11.200M16 12.500H18" stroke="#6c7a86" stroke-width="1.400"/><rect x="11.400" y="9.700" width="4.400" height="5.600" rx="0.800" fill="none" stroke="#6c7a86" stroke-width="1.500"/></svg><svg style="left:1268.8px;top:677.5px" width="4" height="18" viewBox="0 0 4 18" ><g fill="#4d4d4d"><circle cx="2" cy="2" r="2"/><circle cx="2" cy="8.2" r="2"/><circle cx="2" cy="14.4" r="2"/></g></svg>
<div class="row ht" style="left:390px;top:747px;width:905px;height:51px"><div class="grad gt" style="height:51px"></div><div class="dv" style="left:44px;height:51px"></div><div class="dv" style="left:110px;height:51px"></div><div class="dv" style="left:211px;height:51px"></div></div>
<svg style="left:403px;top:766px" width="19" height="14" viewBox="0 0 19 14" ><g transform="scale(1.0)" fill="#fff" stroke-width="1.200" stroke-linejoin="round"><rect x="5.600" y="0.600" width="11.800" height="7" rx="1.500" stroke="#6f8fcf"/><rect x="3.100" y="2.600" width="11.800" height="7" rx="1.500" stroke="#6f8fcf"/><rect x="0.600" y="4.800" width="12.600" height="7.400" rx="1.800" stroke="#ea4c7d" stroke-width="1.400"/><path d="M3.200 8.500H4.200M6 8.500H10.600" stroke="#ea4c7d" stroke-width="1.300" stroke-linecap="round"/></g></svg>
<div class="inc" style="left:458.85px;top:760.5px;font-size:16.0px;line-height:24px;color:#3c4a57;letter-spacing:-0.15px;">Or</div>
<div class="inc" style="left:524.36px;top:760.5px;font-size:17px;line-height:24px;color:#3c4a57;letter-spacing:-0.094px;">Include</div>
<svg style="left:617.5px;top:767px" width="17" height="12" viewBox="0 0 17 12" ><g transform="scale(0.9)" fill="#fff" stroke-width="1.200" stroke-linejoin="round"><rect x="5.600" y="0.600" width="11.800" height="7" rx="1.500" stroke="#6f8fcf"/><rect x="3.100" y="2.600" width="11.800" height="7" rx="1.500" stroke="#6f8fcf"/><rect x="0.600" y="4.800" width="12.600" height="7.400" rx="1.800" stroke="#ea4c7d" stroke-width="1.400"/><path d="M3.200 8.500H4.200M6 8.500H10.600" stroke="#ea4c7d" stroke-width="1.300" stroke-linecap="round"/></g></svg>
<div class="crit" style="left:639.71px;top:760.5px;font-size:16.75px;line-height:24px;color:#1f1f1f;letter-spacing:-0.309px;">Frequent Purchasers</div>
<svg style="left:1268.8px;top:764.2px" width="4" height="18" viewBox="0 0 4 18" ><g fill="#4d4d4d"><circle cx="2" cy="2" r="2"/><circle cx="2" cy="8.2" r="2"/><circle cx="2" cy="14.4" r="2"/></g></svg>
<div class="abs" style="left:382px;top:938.500px;width:921px;height:2px;background:#eeeeee"></div>
<svg style="left:388px;top:956px" width="24" height="24" viewBox="0 0 24 24" ><path d="M12 1V23M1 12H23" stroke="#1680d8" stroke-width="3.200" stroke-linecap="round"/></svg>
<div class="t" style="left:425.3px;top:956.0px;font-size:14.5px;line-height:24px;color:#222;letter-spacing:-0.256px;-webkit-text-stroke:0.2px currentColor;">Add New Criteria List</div>
<div class="abs" style="left:62px;top:1007px;width:1241px;height:3px;background:#efefef"></div>
<div class="card" style="left:30px;top:1032px;width:643.500px;height:345px"></div>
<div class="abs" style="left:30px;top:1075px;width:643.500px;height:1px;background:#e3e6e9"></div>
<div class="t" style="left:47.14px;top:1042.0px;font-size:18px;line-height:24px;color:#3c4a57;letter-spacing:0.802px;-webkit-text-stroke:0.55px currentColor;">High Value/Lengthy Commute Intersect*</div>
<svg style="left:514px;top:1044.5px" width="18" height="18" viewBox="0 0 19 19" ><path d="M9 2.500H1V18H16.500V10.500" fill="none" stroke="#5f6b75" stroke-width="1.600"/><path d="M9 10L17.500 1.500M11.500 1H18V7.500" fill="none" stroke="#4a78b8" stroke-width="1.600"/></svg>
<svg style="left:549.5px;top:1045px" width="17" height="17" viewBox="0 0 22 22" ><path d="M12.600 20.060A9.200 9.200 0 1 1 19.340 14.890" fill="none" stroke="#1fae62" stroke-width="2.300" stroke-linecap="round"/><path d="M15.200 12.700L22.200 16.500 16.600 18.800Z" fill="#1fae62" stroke="#1fae62" stroke-width="0.600" stroke-linejoin="round"/></svg>
<svg style="left:590.5px;top:1045.7px" width="9" height="15" viewBox="0 0 9 15" ><path d="M0.500 0.500L8.5 7.5L0.500 14.5" fill="none" stroke="#8a98a5" stroke-width="1.6"/></svg>
<svg style="left:619.8px;top:1045.8px" width="4" height="16" viewBox="0 0 4 16" ><g fill="#8a98a5"><circle cx="2" cy="2" r="1.9"/><circle cx="2" cy="7.85" r="1.9"/><circle cx="2" cy="13.7" r="1.9"/></g></svg>
<svg style="left:644px;top:1046px" width="14.5" height="14.5" viewBox="0 0 14.5 14.5" ><path d="M0.500 0.500L14.0 14.0M14.0 0.500L0.500 14.0" stroke="#959595" stroke-width="1.5" fill="none"/></svg>
<svg style="left:30px;top:1076px" width="643" height="293" viewBox="30 1076 643 293"><circle cx="207.300" cy="1253.600" r="133" fill="rgb(128,128,255)"/><circle cx="372.200" cy="1253.600" r="133" fill="rgba(0,128,0,0.5)"/><circle cx="207.300" cy="1253.600" r="133" fill="none" stroke="#000" stroke-width="6.600"/><circle cx="372.200" cy="1253.600" r="133" fill="none" stroke="#000" stroke-width="6.600"/><g font-family="Liberation Sans, sans-serif" fill="#000" stroke="#000" stroke-width="0.500"><text x="208.800" y="1107" font-size="18" text-anchor="middle" stroke-width="0.200" textLength="89.500" lengthAdjust="spacingAndGlyphs">High Value</text><text x="158.400" y="1272" font-size="48" text-anchor="middle" textLength="142.500" lengthAdjust="spacingAndGlyphs">15,990</text><text x="290.700" y="1266.300" font-size="32" text-anchor="middle" textLength="82" lengthAdjust="spacingAndGlyphs">2,494</text><text x="421.400" y="1272.800" font-size="48" text-anchor="middle" textLength="124.500" lengthAdjust="spacingAndGlyphs">2,494</text></g></svg>
<div class="abs" style="left:550.200px;top:1100.500px;width:6px;height:34.500px;border-radius:3px;background:#0000ff"></div>
<div class="t" style="left:564.14px;top:1099.5px;font-size:19px;line-height:24px;color:#111;letter-spacing:0.863px;-webkit-text-stroke:0.35px currentColor;">18,484</div>
<div class="t" style="left:564.48px;top:1119.0px;font-size:11px;line-height:24px;color:#a3a3a3;letter-spacing:0.146px;">High Value</div>
<div class="abs" style="left:550.200px;top:1151px;width:6px;height:34.500px;border-radius:3px;background:#008000"></div>
<div class="t" style="left:564.77px;top:1149.5px;font-size:19px;line-height:24px;color:#111;letter-spacing:0.656px;-webkit-text-stroke:0.35px currentColor;">4,988</div>
<div class="t" style="left:564.7px;top:1169.0px;font-size:11px;line-height:24px;color:#a3a3a3;letter-spacing:0.056px;">Commute 10+</div>
<div class="card" style="left:689.500px;top:1032px;width:314px;height:345px"></div>
<div class="abs" style="left:689.500px;top:1075px;width:314px;height:1px;background:#e3e6e9"></div>
<div class="t" style="left:707.27px;top:1042.0px;font-size:18px;line-height:24px;color:#3c4a57;letter-spacing:0.309px;-webkit-text-stroke:0.55px currentColor;">Target Demogra...</div>
<svg style="left:879px;top:1044.5px" width="18" height="18" viewBox="0 0 19 19" ><path d="M9 2.500H1V18H16.500V10.500" fill="none" stroke="#5f6b75" stroke-width="1.600"/><path d="M9 10L17.500 1.500M11.500 1H18V7.500" fill="none" stroke="#4a78b8" stroke-width="1.600"/></svg>
<svg style="left:919.5px;top:1045.7px" width="9" height="15" viewBox="0 0 9 15" ><path d="M0.500 0.500L8.5 7.5L0.500 14.5" fill="none" stroke="#8a98a5" stroke-width="1.6"/></svg>
<svg style="left:950.2px;top:1045.8px" width="4" height="16" viewBox="0 0 4 16" ><g fill="#8a98a5"><circle cx="2" cy="2" r="1.9"/><circle cx="2" cy="7.85" r="1.9"/><circle cx="2" cy="13.7" r="1.9"/></g></svg>
<svg style="left:972.8px;top:1046px" width="14.5" height="14.5" viewBox="0 0 14.5 14.5" ><path d="M0.500 0.500L14.0 14.0M14.0 0.500L0.500 14.0" stroke="#959595" stroke-width="1.5" fill="none"/></svg>
<svg style="left:817px;top:1158.500px" width="60" height="56" viewBox="0 0 60 56"><circle cx="22.900" cy="22.900" r="20.400" fill="none" stroke="#737e87" stroke-width="4.200"/><path d="M16.300 3V43M29.800 3V43M3 15.800H43M3 30.200H43" stroke="#737e87" stroke-width="4.200" fill="none"/><rect x="31.900" y="24" width="30" height="34" fill="#fff"/><g fill="#1e73c8"><path d="M35.500 34C35.500 31.200 40.800 29.300 47.300 29.300C53.800 29.300 59 31.200 59 34V35.500C59 38.300 53.800 40.200 47.300 40.200C40.800 40.200 35.500 38.300 35.500 35.500Z"/><path d="M35.500 40.200C38 42.200 42.500 43 47.300 43C52 43 56.500 42.200 59 40.200V43.600C59 46.400 53.800 48.300 47.300 48.300C40.800 48.300 35.500 46.400 35.500 43.600Z"/><path d="M35.500 48.300C38 50.300 42.500 51.100 47.300 51.100C52 51.100 56.500 50.300 59 48.300V50.700C59 53.500 53.800 55.400 47.300 55.400C40.800 55.400 35.500 53.500 35.500 50.700Z"/></g></svg>
<div class="t" style="left:740.21px;top:1230.0px;font-size:16.5px;line-height:24px;color:#8a959e;letter-spacing:0.207px;-webkit-text-stroke:0.55px currentColor;">Database Realtime Decision</div>
<div class="t" style="left:761.0px;top:1278.5px;font-size:11.75px;line-height:24px;color:#2b2b2b;letter-spacing:-0.129px;-webkit-text-stroke:0.35px currentColor;">v0.1</div>
<svg style="left:798px;top:1284.2px" width="20" height="12" viewBox="0 0 20 12" ><g fill="none" stroke="#7b8a93" stroke-width="1.4"><path d="M0.700 6C3 2.300 6.300 0.700 10 0.700C13.700 0.700 17 2.300 19.300 6C17 9.700 13.700 11.300 10 11.300C6.300 11.300 3 9.700 0.700 6Z"/><circle cx="10" cy="6" r="2.600"/></g></svg>
<svg style="left:837px;top:1280.3px" width="20" height="19" viewBox="0 0 20 19" ><g fill="#fff" stroke="#8b8f94" stroke-width="1.1" stroke-linejoin="round"><path d="M8 13.500V0.600H15.300L18.700 3.800V13.500Z"/></g><g stroke="#9a9ea3" stroke-width="0.9"><path d="M9.800 3H14M9.800 5.200H17M9.800 7.400H17M9.800 9.600H17M13.500 11.800H17"/></g><path d="M0.800 18V8H5.300L6.300 10.600H13.200V18Z" fill="#fff" stroke="#2f86d6" stroke-width="1.5" stroke-linejoin="round"/></svg>
<svg style="left:875.5px;top:1281.8px" width="19" height="18" viewBox="0 0 19 18" ><g fill="none" stroke="#7b8a93" stroke-width="1.4" stroke-linejoin="round" stroke-linecap="round"><path d="M7 16.800L1 10.600C0.500 10 0.500 9.300 1 8.800L8 1.300C8.400 0.900 8.900 0.700 9.400 0.700H15.300C16.200 0.700 16.800 1.300 16.800 2.200V7"/></g><circle cx="12.800" cy="4.300" r="1.100" fill="#7b8a93"/><circle cx="13.300" cy="12.800" r="5.200" fill="#4a78c4"/><path d="M12 11L10.300 12.800 12 14.600M14.600 11L16.300 12.800 14.600 14.600M13.800 10.600L12.800 15" fill="none" stroke="#cfe0f7" stroke-width="0.8"/></svg>
<svg style="left:910.7px;top:1282.6px" width="19" height="15" viewBox="0 0 19 15" ><g fill="#fff" stroke="#2f86d6" stroke-width="1.5" stroke-linejoin="round"><path d="M0.800 0.800H8.300C9 0.800 9.500 1.200 9.500 1.800C9.500 1.200 10 0.800 10.700 0.800H18.200V12.600H11C10.200 12.600 9.800 13 9.500 13.900C9.200 13 8.800 12.600 8 12.600H0.800Z"/><path d="M9.500 1.800V13.500"/></g><g stroke="#8b8f94" stroke-width="0.9"><path d="M2.800 3.300H7.300M2.800 5.300H7.300M2.800 7.300H7.300M2.800 9.300H7.300M11.700 3.300H16.200M11.700 5.300H16.200M11.700 7.300H16.200M11.700 9.300H16.200"/></g></svg>
<div class="t" style="left:792.09px;top:1315.0px;font-size:14.75px;line-height:24px;color:#8a959e;letter-spacing:-0.304px;">Click to expand</div>
<svg style="left:896.5px;top:1319.3px" width="9" height="15" viewBox="0 0 9 15" ><path d="M0.500 0.500L8 7.25L0.500 14.0" fill="none" stroke="#8a959e" stroke-width="1.5"/></svg>
<div class="abs" style="left:0;top:1369px;width:1375px;height:13px;background:#f9f9f9"></div>
<div class="abs" style="left:0;top:1381px;width:1651px;height:1px;background:#d6d6d6"></div>
<div class="abs" style="left:1375px;top:120px;width:276px;height:1262px;background:#fff"></div>
<div class="abs" style="left:1650px;top:120px;width:1px;height:1262px;background:#dcdcdc"></div>
<div class="abs" style="left:1375px;top:1381px;width:276px;height:1px;background:#dcdcdc"></div>
<div class="t" style="left:1384.62px;top:122.5px;font-size:15px;line-height:24px;color:#2e3f4c;letter-spacing:-0.188px;text-shadow:0 0 0.400px #2e3f4c;">Search</div>
<div class="t" style="left:1447.79px;top:122.5px;font-size:15px;line-height:24px;color:#8a959e;letter-spacing:0.062px;">Browse</div>
<svg style="left:1626px;top:125px" width="16" height="16" viewBox="0 0 16 16" ><path d="M8 0.500V15.500M0.500 8H15.500" stroke="#1680d8" stroke-width="2.300" stroke-linecap="round"/></svg>
<div class="abs" style="left:1375px;top:148px;width:275px;height:3px;background:#ebebeb"></div>
<div class="abs" style="left:1383px;top:148px;width:50px;height:3px;border-radius:2px;background:#2e3f4c"></div>
<div class="t" style="left:1384.66px;top:156.0px;font-size:14px;line-height:24px;color:#111;letter-spacing:0.116px;-webkit-text-stroke:0.5px currentColor;">coreuser</div>
<svg style="left:1624.5px;top:158px" width="19" height="19" viewBox="0 0 20 19" ><g fill="#fff" stroke="#8b8f94" stroke-width="1.1" stroke-linejoin="round"><path d="M8 13.500V0.600H15.300L18.700 3.800V13.500Z"/></g><g stroke="#9a9ea3" stroke-width="0.9"><path d="M9.800 3H14M9.800 5.200H17M9.800 7.400H17M9.800 9.600H17M13.500 11.800H17"/></g><path d="M0.800 18V8H5.300L6.300 10.600H13.200V18Z" fill="#fff" stroke="#2f86d6" stroke-width="1.5" stroke-linejoin="round"/></svg>
<div class="abs" style="left:1375px;top:184px;width:275px;height:2px;background:#efefef"></div>
<div class="t" style="left:1384.66px;top:190.0px;font-size:12.5px;line-height:24px;color:#9aa0a6;letter-spacing:-0.165px;">Search files</div>
<svg style="left:1536px;top:195px" width="10" height="6" viewBox="0 0 10 6" ><path d="M0.500 0.500L5.0 5.7L9.5 0.500" fill="none" stroke="#4f6170" stroke-width="1.7"/></svg>
<svg style="left:1560px;top:191px" width="17" height="17" viewBox="0 0 17 17" ><circle cx="7" cy="7" r="5.800" fill="none" stroke="#4a78b8" stroke-width="1.600"/><path d="M11.300 11.300L15.800 15.800" stroke="#4a78b8" stroke-width="1.800"/></svg>
<svg style="left:1588px;top:192px" width="17" height="15" viewBox="0 0 17 15" ><path d="M0.700 0.700H10.300L6.800 5.700V10.500L4.200 12.300V5.700Z" fill="#fff" stroke="#4a78b8" stroke-width="1.200" stroke-linejoin="round"/><rect x="8.800" y="6.800" width="6.600" height="7.500" fill="#fff" stroke="#8b8f94" stroke-width="1"/><path d="M10.300 8.800H14M10.300 10.600H14M10.300 12.400H14" stroke="#4a86cf" stroke-width="0.800"/></svg>
<svg style="left:1614.5px;top:194.5px" width="10" height="9" viewBox="0 0 10 9" ><path d="M9.500 0V9L0 4.500Z" fill="#bdbdbd"/></svg>
<svg style="left:1635.5px;top:194.5px" width="10" height="9" viewBox="0 0 10 9" ><path d="M0 0V9L9.500 4.500Z" fill="#000"/></svg>
<div class="abs" style="left:1375px;top:213px;width:275px;height:2px;background:#efefef"></div>
<div class="abs" style="left:1638px;top:217px;width:8.500px;height:1139px;background:#f7f7f7"></div>
<div class="abs" style="left:1638px;top:217px;width:8.500px;height:397px;background:#ececec"></div>
<div class="t" style="left:1380.66px;top:229.0px;font-size:14.5px;line-height:24px;color:#8a959e;letter-spacing:-0.232px;">coreuser (User Folder)</div>
<svg style="left:1619px;top:236px" width="10" height="6" viewBox="0 0 10 6" ><path d="M0.500 0.500L5.0 5.7L9.5 0.500" fill="none" stroke="#7b8a93" stroke-width="1.6"/></svg>
<svg style="left:1382px;top:269.8px" width="18" height="16" viewBox="0 0 18 16" ><path d="M8.900 2.700A5.900 5.900 0 0 1 8.900 13.300A5.900 5.900 0 0 1 8.900 2.700Z" fill="#4a78c0"/><g fill="none" stroke="#6c7f90" stroke-width="1.400"><circle cx="6.300" cy="8" r="5.800"/><circle cx="11.500" cy="8" r="5.800"/></g></svg>
<div class="it" style="left:1408.77px;top:267.0px;font-size:12px;line-height:24px;color:#1c1c1c;letter-spacing:0.166px;">13027</div>
<svg style="left:1382px;top:301.8px" width="18" height="16" viewBox="0 0 18 16" ><path d="M8.900 2.700A5.900 5.900 0 0 1 8.900 13.300A5.900 5.900 0 0 1 8.900 2.700Z" fill="#4a78c0"/><g fill="none" stroke="#6c7f90" stroke-width="1.400"><circle cx="6.300" cy="8" r="5.800"/><circle cx="11.500" cy="8" r="5.800"/></g></svg>
<div class="it" style="left:1409.04px;top:299.0px;font-size:12px;line-height:24px;color:#1c1c1c;letter-spacing:-0.085px;">3 Set Venn</div>
<svg style="left:1382px;top:333.8px" width="18" height="16" viewBox="0 0 18 16" ><path d="M8.900 2.700A5.900 5.900 0 0 1 8.900 13.300A5.900 5.900 0 0 1 8.900 2.700Z" fill="#4a78c0"/><g fill="none" stroke="#6c7f90" stroke-width="1.400"><circle cx="6.300" cy="8" r="5.800"/><circle cx="11.500" cy="8" r="5.800"/></g><path d="M2.900 7.900C3.800 11.300 6.400 14 10.400 15.500L2.900 15.800Z" fill="#3a8fd8"/></svg>
<div class="it" style="left:1409.0px;top:331.0px;font-size:12px;line-height:24px;color:#1c1c1c;letter-spacing:0.038px;">8968</div>
<svg style="left:1381.6px;top:365.8px" width="18" height="16" viewBox="0 0 18 16" ><path d="M4 0.800H10.300L14.600 4.800V14.800A1 1 0 0 1 13.600 15.800H4A1 1 0 0 1 3 14.800V1.800A1 1 0 0 1 4 0.800Z" fill="#fff" stroke="#6c7f90" stroke-width="1.400" stroke-linejoin="round"/><g fill="#4a78c0"><ellipse cx="8.800" cy="6.800" rx="3.300" ry="1.300"/><path d="M5.500 8.200C6.500 9 11.100 9 12.100 8.200V9.600C11.100 10.600 6.500 10.600 5.500 9.600Z"/><path d="M5.500 10.800C6.500 11.600 11.100 11.600 12.100 10.800V12.200C11.100 13.200 6.500 13.200 5.500 12.200Z"/></g></svg>
<div class="it" style="left:1409.3px;top:363.0px;font-size:11.25px;line-height:24px;color:#1c1c1c;letter-spacing:-0.183px;">AB&amp;C</div>
<svg style="left:1382px;top:398px" width="18" height="16" viewBox="0 0 18 16" ><g fill="none" stroke="#747679" stroke-width="1.250"><path d="M0.300 13.200H17.500"/><path d="M2.800 13.200V5.600H5.600V13.200M7.700 13.200V8H10.500V13.200M12.800 13.200V2.300H15.600V13.200"/></g></svg>
<div class="it" style="left:1408.74px;top:395.0px;font-size:12px;line-height:24px;color:#1c1c1c;letter-spacing:-0.064px;">Brand New Chart</div>
<svg style="left:1382px;top:430px" width="18" height="16" viewBox="0 0 18 16" ><g fill="none" stroke="#747679" stroke-width="1.250"><path d="M0.300 13.200H17.500"/><path d="M2.800 13.200V5.600H5.600V13.200M7.700 13.200V8H10.500V13.200M12.800 13.200V2.300H15.600V13.200"/></g></svg>
<div class="it" style="left:1408.96px;top:427.0px;font-size:12px;line-height:24px;color:#1c1c1c;letter-spacing:-0.172px;">Chart</div>
<svg style="left:1382px;top:462px" width="18" height="16" viewBox="0 0 18 16" ><g fill="none" stroke="#747679" stroke-width="1.250"><path d="M0.300 13.200H17.500"/><path d="M2.800 13.200V5.600H5.600V13.200M7.700 13.200V8H10.500V13.200M12.800 13.200V2.300H15.600V13.200"/></g></svg>
<div class="it" style="left:1408.96px;top:459.0px;font-size:12px;line-height:24px;color:#1c1c1c;letter-spacing:0.054px;">Chart Analysis Panel</div>
<svg style="left:1382px;top:494px" width="18" height="16" viewBox="0 0 18 16" ><g fill="none" stroke="#747679" stroke-width="1.250"><path d="M0.300 13.200H17.500"/><path d="M2.800 13.200V5.600H5.600V13.200M7.700 13.200V8H10.500V13.200M12.800 13.200V2.300H15.600V13.200"/></g></svg>
<div class="it" style="left:1408.96px;top:491.0px;font-size:12px;line-height:24px;color:#1c1c1c;letter-spacing:0.018px;">Chart Analysis Panel 2</div>
<svg style="left:1382px;top:526px" width="18" height="16" viewBox="0 0 18 16" ><g fill="none" stroke="#747679" stroke-width="1.250"><path d="M0.300 13.200H17.500"/><path d="M2.800 13.200V5.600H5.600V13.200M7.700 13.200V8H10.500V13.200M12.800 13.200V2.300H15.600V13.200"/></g></svg>
<div class="it" style="left:1408.96px;top:523.0px;font-size:12px;line-height:24px;color:#1c1c1c;letter-spacing:-0.051px;">Chart Example</div>
<svg style="left:1382px;top:558px" width="18" height="16" viewBox="0 0 18 16" ><g fill="none" stroke="#747679" stroke-width="1.250"><path d="M0.300 13.200H17.500"/><path d="M2.800 13.200V5.600H5.600V13.200M7.700 13.200V8H10.500V13.200M12.800 13.200V2.300H15.600V13.200"/></g></svg>
<div class="it" style="left:1408.96px;top:555.0px;font-size:12px;line-height:24px;color:#1c1c1c;letter-spacing:0.063px;">Chart of Yearly Income</div>
<svg style="left:1382px;top:590px" width="18" height="16" viewBox="0 0 18 16" ><g fill="none" stroke="#747679" stroke-width="1.250"><path d="M0.300 13.200H17.500"/><path d="M2.800 13.200V5.600H5.600V13.200M7.700 13.200V8H10.500V13.200M12.800 13.200V2.300H15.600V13.200"/></g></svg>
<div class="it" style="left:1408.96px;top:587.0px;font-size:12px;line-height:24px;color:#1c1c1c;letter-spacing:-0.144px;">Chart Save</div>
<svg style="left:1382px;top:622px" width="18" height="16" viewBox="0 0 18 16" ><g fill="none" stroke="#747679" stroke-width="1.250"><path d="M0.300 13.200H17.500"/><path d="M2.800 13.200V5.600H5.600V13.200M7.700 13.200V8H10.500V13.200M12.800 13.200V2.300H15.600V13.200"/></g></svg>
<div class="it" style="left:1408.96px;top:619.0px;font-size:12px;line-height:24px;color:#1c1c1c;letter-spacing:-0.096px;">Chart Save As</div>
<svg style="left:1382px;top:654px" width="18" height="16" viewBox="0 0 18 16" ><g fill="none" stroke="#747679" stroke-width="1.250"><path d="M0.300 13.200H17.500"/><path d="M2.800 13.200V5.600H5.600V13.200M7.700 13.200V8H10.500V13.200M12.800 13.200V2.300H15.600V13.200"/></g></svg>
<div class="it" style="left:1408.96px;top:651.0px;font-size:12px;line-height:24px;color:#1c1c1c;letter-spacing:0.01px;">Chart with Error</div>
<svg style="left:1382px;top:686px" width="18" height="16" viewBox="0 0 18 16" ><g fill="none" stroke="#747679" stroke-width="1.250"><path d="M0.300 13.200H17.500"/><path d="M2.800 13.200V5.600H5.600V13.200M7.700 13.200V8H10.500V13.200M12.800 13.200V2.300H15.600V13.200"/></g></svg>
<div class="it" style="left:1408.96px;top:683.0px;font-size:12px;line-height:24px;color:#1c1c1c;letter-spacing:-0.089px;">Charty Chart</div>
<svg style="left:1381.6px;top:717.8px" width="18" height="16" viewBox="0 0 18 16" ><path d="M4 0.800H10.300L14.600 4.800V14.800A1 1 0 0 1 13.600 15.800H4A1 1 0 0 1 3 14.800V1.800A1 1 0 0 1 4 0.800Z" fill="#fff" stroke="#6c7f90" stroke-width="1.400" stroke-linejoin="round"/><g fill="#4a78c0"><ellipse cx="8.800" cy="6.800" rx="3.300" ry="1.300"/><path d="M5.500 8.200C6.500 9 11.100 9 12.100 8.200V9.600C11.100 10.600 6.500 10.600 5.500 9.600Z"/><path d="M5.500 10.800C6.500 11.600 11.100 11.600 12.100 10.800V12.200C11.100 13.200 6.500 13.200 5.500 12.200Z"/></g></svg>
<div class="it" style="left:1408.96px;top:715.0px;font-size:12px;line-height:24px;color:#1c1c1c;letter-spacing:-0.06px;">Crosstab Save</div>
<svg style="left:1381.6px;top:749.8px" width="18" height="16" viewBox="0 0 18 16" ><path d="M4 0.800H10.300L14.600 4.800V14.800A1 1 0 0 1 13.600 15.800H4A1 1 0 0 1 3 14.800V1.800A1 1 0 0 1 4 0.800Z" fill="#fff" stroke="#6c7f90" stroke-width="1.400" stroke-linejoin="round"/><g fill="#4a78c0"><ellipse cx="8.800" cy="6.800" rx="3.300" ry="1.300"/><path d="M5.500 8.200C6.500 9 11.100 9 12.100 8.200V9.600C11.100 10.600 6.500 10.600 5.500 9.600Z"/><path d="M5.500 10.800C6.500 11.600 11.100 11.600 12.100 10.800V12.200C11.100 13.200 6.500 13.200 5.500 12.200Z"/></g></svg>
<div class="it" style="left:1408.96px;top:747.0px;font-size:12px;line-height:24px;color:#1c1c1c;letter-spacing:-0.042px;">Crosstab Save As</div>
<svg style="left:1382px;top:781.8px" width="18" height="16" viewBox="0 0 18 16" ><path d="M8.900 2.700A5.900 5.900 0 0 1 8.900 13.300A5.900 5.900 0 0 1 8.900 2.700Z" fill="#4a78c0"/><g fill="none" stroke="#6c7f90" stroke-width="1.400"><circle cx="6.300" cy="8" r="5.800"/><circle cx="11.500" cy="8" r="5.800"/></g><path d="M2.900 7.900C3.800 11.300 6.400 14 10.400 15.500L2.900 15.800Z" fill="#3a8fd8"/></svg>
<div class="it" style="left:1408.74px;top:779.0px;font-size:12px;line-height:24px;color:#1c1c1c;letter-spacing:0.068px;">Dirty Venn</div>
<svg style="left:1382px;top:814px" width="18" height="16" viewBox="0 0 18 16" ><g fill="none" stroke="#747679" stroke-width="1.250"><path d="M0.300 13.200H17.500"/><path d="M2.800 13.200V5.600H5.600V13.200M7.700 13.200V8H10.500V13.200M12.800 13.200V2.300H15.600V13.200"/></g><path d="M2.900 7.900C3.800 11.300 6.400 14 10.400 15.500L2.900 15.800Z" fill="#3a8fd8"/></svg>
<div class="it" style="left:1408.74px;top:811.0px;font-size:12px;line-height:24px;color:#1c1c1c;letter-spacing:-0.209px;">Doc DB Chart</div>
<svg style="left:1382px;top:846px" width="18" height="16" viewBox="0 0 18 16" ><g fill="none" stroke="#747679" stroke-width="1.250"><path d="M0.300 13.200H17.500"/><path d="M2.800 13.200V5.600H5.600V13.200M7.700 13.200V8H10.500V13.200M12.800 13.200V2.300H15.600V13.200"/></g><path d="M2.900 7.900C3.800 11.300 6.400 14 10.400 15.500L2.900 15.800Z" fill="#3a8fd8"/></svg>
<div class="it" style="left:1408.74px;top:843.0px;font-size:12px;line-height:24px;color:#1c1c1c;letter-spacing:-0.159px;">Doc DB Chart 2</div>
<svg style="left:1382px;top:878px" width="18" height="16" viewBox="0 0 18 16" ><g fill="none" stroke="#747679" stroke-width="1.250"><path d="M0.300 13.200H17.500"/><path d="M2.800 13.200V5.600H5.600V13.200M7.700 13.200V8H10.500V13.200M12.800 13.200V2.300H15.600V13.200"/></g><path d="M2.900 7.900C3.800 11.300 6.400 14 10.400 15.500L2.900 15.800Z" fill="#3a8fd8"/></svg>
<div class="it" style="left:1408.74px;top:875.0px;font-size:12px;line-height:24px;color:#1c1c1c;letter-spacing:-0.171px;">Doc DB Chart 3</div>
<svg style="left:1381.6px;top:909.8px" width="18" height="16" viewBox="0 0 18 16" ><path d="M4 0.800H10.300L14.600 4.800V14.800A1 1 0 0 1 13.600 15.800H4A1 1 0 0 1 3 14.800V1.800A1 1 0 0 1 4 0.800Z" fill="#fff" stroke="#6c7f90" stroke-width="1.400" stroke-linejoin="round"/><g fill="#4a78c0"><ellipse cx="8.800" cy="6.800" rx="3.300" ry="1.300"/><path d="M5.500 8.200C6.500 9 11.100 9 12.100 8.200V9.600C11.100 10.600 6.500 10.600 5.500 9.600Z"/><path d="M5.500 10.800C6.500 11.600 11.100 11.600 12.100 10.800V12.200C11.100 13.200 6.500 13.200 5.500 12.200Z"/></g></svg>
<div class="it" style="left:1408.74px;top:907.0px;font-size:12px;line-height:24px;color:#1c1c1c;letter-spacing:-0.082px;">Doc DB Crosstab</div>
<svg style="left:1382px;top:942px" width="18" height="16" viewBox="0 0 18 16" ><path d="M2.500 0.800H15A1 1 0 0 1 16 1.800V11.500L12 15.300H2.500A1 1 0 0 1 1.500 14.300V1.800A1 1 0 0 1 2.500 0.800Z" fill="#fff" stroke="#6c7f90" stroke-width="1.400" stroke-linejoin="round"/><path d="M12 15.300V11.500H16" fill="none" stroke="#6c7f90" stroke-width="1"/><path d="M5.600 2.800V13.500M3.300 4.800H14M3.300 7.400H14M3.300 10H13M3.300 12.600H10" fill="none" stroke="#4a86cf" stroke-width="1"/><path d="M3 6.500C3.600 11 6.500 13.800 10.800 15.200L2.200 15.300Z" fill="#3a8fd8"/></svg>
<div class="it" style="left:1408.74px;top:939.0px;font-size:12px;line-height:24px;color:#1c1c1c;letter-spacing:-0.119px;">Doc DB Pivot</div>
<svg style="left:1382px;top:974px" width="18" height="16" viewBox="0 0 18 16" ><g fill="none" stroke="#747679" stroke-width="1.250"><path d="M0.300 13.200H17.500"/><path d="M2.800 13.200V5.600H5.600V13.200M7.700 13.200V8H10.500V13.200M12.800 13.200V2.300H15.600V13.200"/></g></svg>
<div class="it" style="left:1408.74px;top:971.0px;font-size:12px;line-height:24px;color:#1c1c1c;letter-spacing:-0.046px;">Edit Chart</div>
<svg style="left:1382px;top:1006px" width="18" height="16" viewBox="0 0 18 16" ><path d="M4.500 2.500C6 0.800 8.500 1.200 9.300 1.800C10.800 0.300 13.800 0.800 14 3.200C16 3.800 16.300 6.300 15 7.300C16.800 8.600 16.600 11.300 14.600 11.800C14.600 14 12.300 15.300 10.300 14C8.800 15.400 6.300 15.300 5.300 13.600C3 13.900 1.300 11.900 2.500 9.900C0.500 8.800 0.600 6 2.600 5.300C2.300 4 3.200 2.600 4.500 2.500Z" fill="#fff" stroke="#6c7f90" stroke-width="1.200" stroke-linejoin="round"/><path d="M4.300 4.800H12.500M3.500 7H12.500M5.300 9.200H12.500M4.800 11.400H10.500M11.500 12.200H13.500" fill="none" stroke="#4a86cf" stroke-width="1.300"/></svg>
<div class="it" style="left:1408.74px;top:1003.0px;font-size:12px;line-height:24px;color:#1c1c1c;letter-spacing:0.013px;">Edit Cloud</div>
<svg style="left:1381.6px;top:1037.8px" width="18" height="16" viewBox="0 0 18 16" ><path d="M4 0.800H10.300L14.600 4.800V14.800A1 1 0 0 1 13.600 15.800H4A1 1 0 0 1 3 14.800V1.800A1 1 0 0 1 4 0.800Z" fill="#fff" stroke="#6c7f90" stroke-width="1.400" stroke-linejoin="round"/><g fill="#4a78c0"><ellipse cx="8.800" cy="6.800" rx="3.300" ry="1.300"/><path d="M5.500 8.200C6.500 9 11.100 9 12.100 8.200V9.600C11.100 10.600 6.500 10.600 5.500 9.600Z"/><path d="M5.500 10.800C6.500 11.600 11.100 11.600 12.100 10.800V12.200C11.100 13.200 6.500 13.200 5.500 12.200Z"/></g></svg>
<div class="it" style="left:1408.74px;top:1035.0px;font-size:12px;line-height:24px;color:#1c1c1c;letter-spacing:0.048px;">Edit Crosstab</div>
<svg style="left:1382px;top:1070px" width="18" height="16" viewBox="0 0 18 16" ><path d="M2.500 0.800H15A1 1 0 0 1 16 1.800V11.500L12 15.300H2.500A1 1 0 0 1 1.500 14.300V1.800A1 1 0 0 1 2.500 0.800Z" fill="#fff" stroke="#6c7f90" stroke-width="1.400" stroke-linejoin="round"/><path d="M12 15.300V11.500H16" fill="none" stroke="#6c7f90" stroke-width="1"/><path d="M5.600 2.800V13.500M3.300 4.800H14M3.300 7.400H14M3.300 10H13M3.300 12.600H10" fill="none" stroke="#4a86cf" stroke-width="1"/></svg>
<div class="it" style="left:1408.74px;top:1067.0px;font-size:12px;line-height:24px;color:#1c1c1c;letter-spacing:0.046px;">Edit Pivot</div>
<svg style="left:1382px;top:1101.8px" width="18" height="16" viewBox="0 0 18 16" ><path d="M8.900 2.700A5.900 5.900 0 0 1 8.900 13.300A5.900 5.900 0 0 1 8.900 2.700Z" fill="#4a78c0"/><g fill="none" stroke="#6c7f90" stroke-width="1.400"><circle cx="6.300" cy="8" r="5.800"/><circle cx="11.500" cy="8" r="5.800"/></g></svg>
<div class="it" style="left:1408.74px;top:1099.0px;font-size:12px;line-height:24px;color:#1c1c1c;letter-spacing:0.002px;">Edit Venn</div>
<svg style="left:1381.6px;top:1133.8px" width="18" height="16" viewBox="0 0 18 16" ><path d="M4 0.800H10.300L14.600 4.800V14.800A1 1 0 0 1 13.600 15.800H4A1 1 0 0 1 3 14.800V1.800A1 1 0 0 1 4 0.800Z" fill="#fff" stroke="#6c7f90" stroke-width="1.400" stroke-linejoin="round"/><g fill="#4a78c0"><ellipse cx="8.800" cy="6.800" rx="3.300" ry="1.300"/><path d="M5.500 8.200C6.500 9 11.100 9 12.100 8.200V9.600C11.100 10.600 6.500 10.600 5.500 9.600Z"/><path d="M5.500 10.800C6.500 11.600 11.100 11.600 12.100 10.800V12.200C11.100 13.200 6.500 13.200 5.500 12.200Z"/></g></svg>
<div class="it" style="left:1408.74px;top:1131.0px;font-size:12px;line-height:24px;color:#1c1c1c;letter-spacing:0.07px;">Education Crosstab</div>
<svg style="left:1382px;top:1166px" width="18" height="16" viewBox="0 0 18 16" ><path d="M2.500 0.800H15A1 1 0 0 1 16 1.800V11.500L12 15.300H2.500A1 1 0 0 1 1.500 14.300V1.800A1 1 0 0 1 2.500 0.800Z" fill="#fff" stroke="#6c7f90" stroke-width="1.400" stroke-linejoin="round"/><path d="M12 15.300V11.500H16" fill="none" stroke="#6c7f90" stroke-width="1"/><path d="M5.600 2.800V13.500M3.300 4.800H14M3.300 7.400H14M3.300 10H13M3.300 12.600H10" fill="none" stroke="#4a86cf" stroke-width="1"/></svg>
<div class="it" style="left:1408.74px;top:1163.0px;font-size:12px;line-height:24px;color:#1c1c1c;letter-spacing:0.052px;">English Pivot</div>
<svg style="left:1382px;top:1198px" width="18" height="16" viewBox="0 0 18 16" ><path d="M4.500 2.500C6 0.800 8.500 1.200 9.300 1.800C10.800 0.300 13.800 0.800 14 3.200C16 3.800 16.300 6.300 15 7.300C16.800 8.600 16.600 11.300 14.600 11.800C14.600 14 12.300 15.300 10.300 14C8.800 15.400 6.300 15.300 5.300 13.600C3 13.900 1.300 11.900 2.500 9.900C0.500 8.800 0.600 6 2.600 5.300C2.300 4 3.200 2.600 4.500 2.500Z" fill="#fff" stroke="#6c7f90" stroke-width="1.200" stroke-linejoin="round"/><path d="M4.300 4.800H12.500M3.500 7H12.500M5.300 9.200H12.500M4.800 11.400H10.500M11.500 12.200H13.500" fill="none" stroke="#4a86cf" stroke-width="1.300"/></svg>
<div class="it" style="left:1408.74px;top:1195.0px;font-size:12px;line-height:24px;color:#1c1c1c;letter-spacing:0.112px;">First Names</div>
<svg style="left:1382px;top:1229.8px" width="18" height="16" viewBox="0 0 18 16" ><path d="M8.900 2.700A5.900 5.900 0 0 1 8.900 13.300A5.900 5.900 0 0 1 8.900 2.700Z" fill="#4a78c0"/><g fill="none" stroke="#6c7f90" stroke-width="1.400"><circle cx="6.300" cy="8" r="5.800"/><circle cx="11.500" cy="8" r="5.800"/></g></svg>
<div class="it" style="left:1408.74px;top:1227.0px;font-size:12px;line-height:24px;color:#1c1c1c;letter-spacing:0.127px;">High Value/Lengthy Commute Intersect</div>
<svg style="left:1382px;top:1262px" width="18" height="16" viewBox="0 0 18 16" ><rect x="0.900" y="1.700" width="15.600" height="12.200" rx="0.800" fill="#fff" stroke="#6c7378" stroke-width="1.500"/><path d="M5 10.600V8.600M8.700 10.600V6.700M12.400 10.600V7.600" stroke="#6c7378" stroke-width="1.300"/></svg>
<div class="it" style="left:1408.74px;top:1259.0px;font-size:12px;line-height:24px;color:#1c1c1c;letter-spacing:0.068px;">Map Time Nice Nice</div>
<svg style="left:1382px;top:1294px" width="18" height="16" viewBox="0 0 18 16" ><path d="M2.500 0.800H15A1 1 0 0 1 16 1.800V11.500L12 15.300H2.500A1 1 0 0 1 1.500 14.300V1.800A1 1 0 0 1 2.500 0.800Z" fill="#fff" stroke="#6c7f90" stroke-width="1.400" stroke-linejoin="round"/><path d="M12 15.300V11.500H16" fill="none" stroke="#6c7f90" stroke-width="1"/><path d="M5.600 2.800V13.500M3.300 4.800H14M3.300 7.400H14M3.300 10H13M3.300 12.600H10" fill="none" stroke="#4a86cf" stroke-width="1"/></svg>
<div class="it" style="left:1408.74px;top:1291.0px;font-size:12px;line-height:24px;color:#1c1c1c;letter-spacing:0.11px;">Mike Pivot</div>
<svg style="left:1381.6px;top:1325.8px" width="18" height="16" viewBox="0 0 18 16" ><path d="M4 0.800H10.300L14.600 4.800V14.800A1 1 0 0 1 13.600 15.800H4A1 1 0 0 1 3 14.800V1.800A1 1 0 0 1 4 0.800Z" fill="#fff" stroke="#6c7f90" stroke-width="1.400" stroke-linejoin="round"/><g fill="#4a78c0"><ellipse cx="8.800" cy="6.800" rx="3.300" ry="1.300"/><path d="M5.500 8.200C6.500 9 11.100 9 12.100 8.200V9.600C11.100 10.600 6.500 10.600 5.500 9.600Z"/><path d="M5.500 10.800C6.500 11.600 11.100 11.600 12.100 10.800V12.200C11.100 13.200 6.500 13.200 5.500 12.200Z"/></g></svg>
<div class="it" style="left:1408.96px;top:1323.0px;font-size:12px;line-height:24px;color:#1c1c1c;letter-spacing:0.072px;">Occupation vs. Education</div>
<div class="abs" style="left:1601px;top:1359px;width:20px;height:20px;border-radius:2px;background:#d5e4f5"></div>
<svg style="left:1602px;top:1361px" width="17" height="16" viewBox="0 0 17 16" ><g fill="#b9dff0" stroke="#8d8d8d" stroke-width="1"><rect x="0.500" y="0.700" width="3.300" height="3.300"/><rect x="0.500" y="6.200" width="3.300" height="3.300"/><rect x="0.500" y="11.400" width="3.300" height="3.300"/></g><path d="M5 2.200H16M5 7.700H16M5 12.700H16" stroke="#a3a9b0" stroke-width="1.200"/></svg>
<svg style="left:1629px;top:1361px" width="15" height="15" viewBox="0 0 15 15" ><rect x="0.700" y="0.700" width="13.300" height="13.600" fill="#a8d8ea" stroke="#8a8a8a" stroke-width="1.200"/><path d="M1.300 6C4 3.800 7 4 13.400 7.800V13.700H1.300Z" fill="#5bb074"/><path d="M1.300 10.800C5 11 9 10.800 13.400 10V13.700H1.300Z" fill="#2e8b3d"/></svg>
</body>
</html>
